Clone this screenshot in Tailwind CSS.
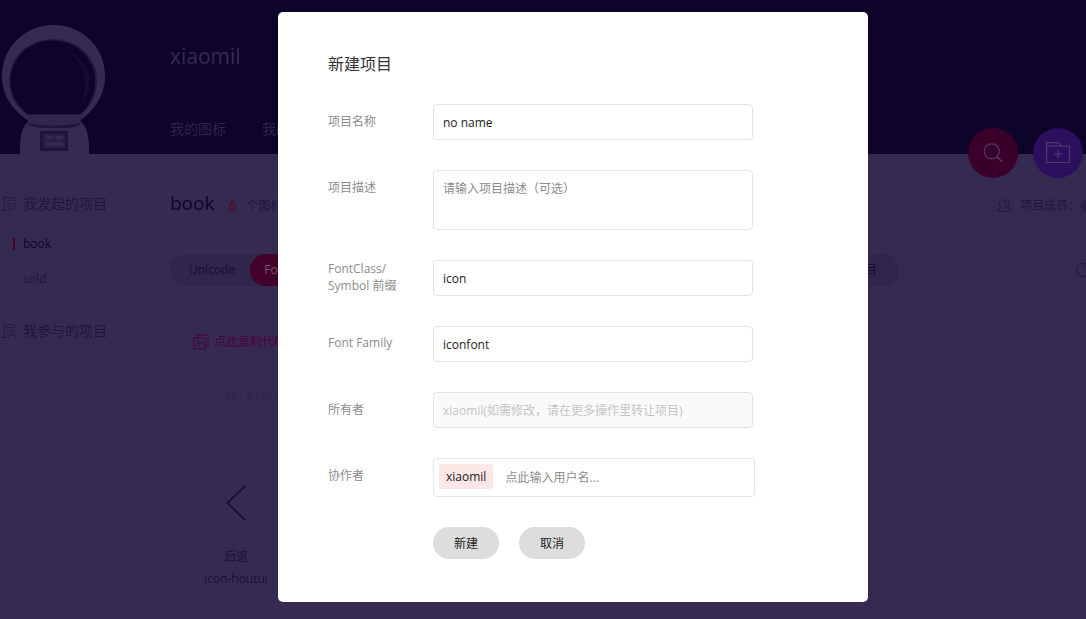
<!DOCTYPE html>
<html lang="zh-CN">
<head>
<meta charset="utf-8">
<meta name="viewport" content="width=device-width, initial-scale=1">
<title>新建项目</title>
<script src="https://cdn.jsdelivr.net/npm/@tailwindcss/browser@4"></script>
</head>
<body class="relative min-h-screen overflow-hidden bg-[#352b50] font-['Open_Sans','Noto_Sans_CJK_SC',sans-serif] text-xs text-[#150a33]">

<!-- Dimmed page behind the dialog -->
<header class="flex h-[154px] items-end bg-[#0e042a]">
  <svg class="ml-0.5 h-[130px] w-[104px] shrink-0" viewBox="0 0 104 130" aria-hidden="true">
    <path d="M18 130V122Q18 103 29 95H76Q87 103 87 122V130Z" fill="#352b50"/>
    <path fill="#352b50" d="M51.500 1C80 1 103 23 103 52C103 74 90 88 76 98H28C13 88 0 74 0 52C0 23 23 1 51.500 1Z"/>
    <path fill="#231940" d="M51 15C75 15 95 33 95 57C95 73 87 84 78 91H25C15 83 7 73 7 56C7 33 27 15 51 15Z"/>
    <path fill="#0e042a" d="M50 16.500C74 16.500 93 34 93 57C93 73 86 83 78 90H26C16 82 8.500 72 8.500 57C8.500 34 27 16.500 50 16.500Z"/>
    <path d="M66 26C88 38 95 61 78 82C88 61 84 42 66 26Z" fill="#150a33"/>
    <path d="M24 91H80Q79 101 72 101H33Q26 101 24 91Z" fill="#30264b"/>
    <path d="M25 99Q51 104 79 99Q76 104 62 104H43Q29 104 25 99Z" fill="#20153e"/>
    <path d="M38 107H66V127H38Z" fill="#1f143d"/>
    <path d="M41 110H63V124H41Z" fill="#2a2046"/>
    <path d="M44 113.500H51M54 113.500H61M44 120H61" stroke="#342a4f" stroke-width="3"/>
  </svg>
  <div class="flex h-full flex-1 flex-col justify-between pt-10 pb-3.5 pl-16">
    <div class="text-[21px] leading-8 text-[#352b50]">xiaomil</div>
    <nav class="flex gap-9 text-sm leading-[22px] text-[#2d2348]"><a href="#">我的图标</a><a href="#">我的项目</a></nav>
  </div>
  <div class="-mb-6 flex gap-[15px] pr-[3px] text-[#503a69]">
    <button type="button" aria-label="搜索" class="flex size-[50px] items-center justify-center rounded-full bg-[#3b0029]">
      <svg class="size-5" viewBox="0 0 24 24" fill="none" stroke="currentColor" stroke-width="1.500"><circle cx="10.500" cy="10" r="9"/><path d="M17 16.500L22.500 22.500" stroke-width="2.200"/></svg>
    </button>
    <button type="button" aria-label="新建项目" class="flex size-[50px] items-center justify-center rounded-full bg-[#2c0f5d]">
      <svg class="size-6" viewBox="0 0 24 24" fill="none" stroke="currentColor" stroke-width="1.200"><path d="M.600 21.500V1.600H11.500L15.500 5H23.400V21.500ZM.600 5H15.500M12 9V17M8 13H16"/></svg>
    </button>
  </div>
</header>

<div class="flex pt-[38px]">
  <aside class="flex h-[150px] w-[140px] shrink-0 flex-col border-r border-[#32284d] text-[#20163f]">
    <h2 class="flex items-center gap-1.5 pl-px text-sm leading-6">
      <svg class="size-4 shrink-0" viewBox="0 0 16 16" fill="none" stroke="currentColor" stroke-width=".8"><path d="M14 6V1.500H3V12Q2.500 14.500 .500 14.500H8M5.500 4.500H11.500M5.500 7.500H10M5.500 10.500H8M9 14L9.500 11L14 7L15.500 8.500L11.500 13Z"/></svg>
      我发起的项目
    </h2>
    <a href="#" class="mt-[21px] ml-[13px] flex items-center gap-2 leading-[14px] text-[#0e042a]"><span class="h-3 w-0.5 bg-[#4a0029]"></span>book</a>
    <a href="#" class="mt-5 ml-[23px] leading-4">sold</a>
    <h2 class="mt-8 flex items-center gap-1.5 pl-px text-sm leading-6">
      <svg class="size-4 shrink-0" viewBox="0 0 16 16" fill="none" stroke="currentColor" stroke-width=".8"><path d="M14 5V1.500H3V12Q2.500 14.500 .500 14.500H6M5.500 4.500H11.500M5.500 7.500H8M5.500 10.500H7"/><circle cx="11.500" cy="9" r="2.200"/><path d="M7.500 15Q8 11.500 11.500 11.500T15.500 15"/></svg>
      我参与的项目
    </h2>
  </aside>

  <main class="min-w-0 flex-1 pl-[30px]">
    <div class="flex h-7 items-center">
      <h1 class="-mt-1.5 text-[19px] leading-6 text-[#0e042a]">book</h1>
      <span class="ml-3.5 text-sm leading-6 text-[#5a0029]">6</span>
      <span class="ml-2.5 text-[#20163f]">个图标</span>
      <span class="ml-auto flex items-center gap-2 text-[#20163f]">
        <svg class="size-4" viewBox="0 0 16 16" fill="none" stroke="currentColor" stroke-width=".8"><path d="M1.500 13.500Q1 11.500 5 10.500Q3 8 3.500 5Q4.500 2 7 2Q10 2 10 5.500Q10 8.500 8.500 10.500Q12.500 11.500 12 13.500ZM9 2Q13 .500 13 5Q13 7.500 11.500 9.500Q15 11 14.500 12.500H13"/></svg>
        项目成员：
      </span>
      <span class="-mr-1.5 size-3 shrink-0 rounded-full bg-[#2a2046]"></span>
    </div>

    <div class="mt-[34px] flex items-center">
      <div class="flex h-8 w-[729px] items-center justify-between rounded-full bg-[#30264c] pr-[22px]">
        <div class="flex h-full items-center">
          <button type="button" class="pr-[15px] pl-[19px]">Unicode</button>
          <button type="button" class="h-full rounded-full bg-[#430028] px-3.5 text-[#6d5a7c]">Font class</button>
        </div>
        <button type="button">编辑项目</button>
      </div>
      <button type="button" aria-label="帮助" class="-mr-1 ml-auto flex size-3.5 shrink-0 items-center justify-center rounded-full border border-[#20163f] text-[10px] text-[#20163f]">?</button>
    </div>

    <section class="mt-[39px] h-[90px] border-l border-[#30264c] pt-[7px] pl-[22px]">
      <a href="#" class="flex items-center gap-[5px] leading-5 text-[#4c003f]">
        <svg class="size-4" viewBox="0 0 16 16" fill="none" stroke="currentColor"><path d="M1 4H12V15H1ZM4 4V1H15V12H12M3.500 7.500H9.500M3.500 9.500H9.500M3.500 11.500H7"/></svg>
        点此复制代码
      </a>
      <code class="mt-9 block pl-4 font-['Liberation_Mono',monospace] text-[#2f254b]">//at.alicdn.com</code>
    </section>

    <figure class="mt-[70px] flex w-[132px] flex-col items-center">
      <svg class="h-9 w-5" viewBox="0 0 20 36" fill="none" stroke="#1a0f38" stroke-width="1.800" stroke-linecap="round" stroke-linejoin="round"><path d="M18.500 1.500L1.500 18L18.500 34.500"/></svg>
      <figcaption class="mt-[25px] text-center leading-[22px] text-[#1a0f38]">后退<br>icon-houtui</figcaption>
    </figure>
  </main>
</div>

<!-- Dialog -->
<div class="absolute inset-0 flex items-start justify-center pt-3 pl-[60px]">
  <form role="dialog" aria-labelledby="dialog-title" class="w-[590px] rounded-[5px] bg-white px-[50px] pt-10 pb-[43px] leading-[17px] text-[#222]">
    <h2 id="dialog-title" class="mb-7 text-base leading-6 text-[#333]">新建项目</h2>
    <div class="grid grid-cols-[105px_1fr] gap-y-[30px]">
      <label for="name" class="pt-[9px] text-[#8c8c8c]">项目名称</label>
      <input id="name" value="no name" class="h-9 w-80 rounded border border-[#e3e3e3] px-[9px]">

      <label for="desc" class="pt-[9px] text-[#8c8c8c]">项目描述</label>
      <textarea id="desc" placeholder="请输入项目描述（可选）" class="block h-[60px] w-80 resize-none rounded border border-[#e3e3e3] px-[9px] py-[9px] placeholder:text-[#8c8c8c]"></textarea>

      <label for="prefix" class="text-[#8c8c8c]">FontClass/<br>Symbol 前缀</label>
      <input id="prefix" value="icon" class="h-9 w-80 rounded border border-[#e3e3e3] px-[9px]">

      <label for="family" class="pt-2 text-[#8c8c8c]">Font Family</label>
      <input id="family" value="iconfont" class="h-9 w-80 rounded border border-[#e3e3e3] px-[9px]">

      <label for="owner" class="pt-[9px] text-[#8c8c8c]">所有者</label>
      <input id="owner" disabled value="xiaomil(如需修改，请在更多操作里转让项目)" class="h-9 w-80 rounded border border-[#e3e3e3] bg-[#fafafa] px-[9px] text-[#c4c4c4]">

      <label for="members" class="pt-[9px] text-[#8c8c8c]">协作者</label>
      <div class="flex h-[39px] w-[322px] items-start rounded border border-[#e3e3e3] p-[5px]">
        <span class="rounded-xs bg-[#fce6e6] px-[7px] py-1">xiaomil</span>
        <input id="members" placeholder="点此输入用户名..." class="ml-3 h-[27px] min-w-0 flex-1 placeholder:text-[#8c8c8c]">
      </div>

      <div class="col-start-2 flex gap-5">
        <button type="submit" class="h-8 w-[66px] rounded-full bg-[#ddd]">新建</button>
        <button type="button" class="h-8 w-[66px] rounded-full bg-[#ddd]">取消</button>
      </div>
    </div>
  </form>
</div>
</body>
</html>
